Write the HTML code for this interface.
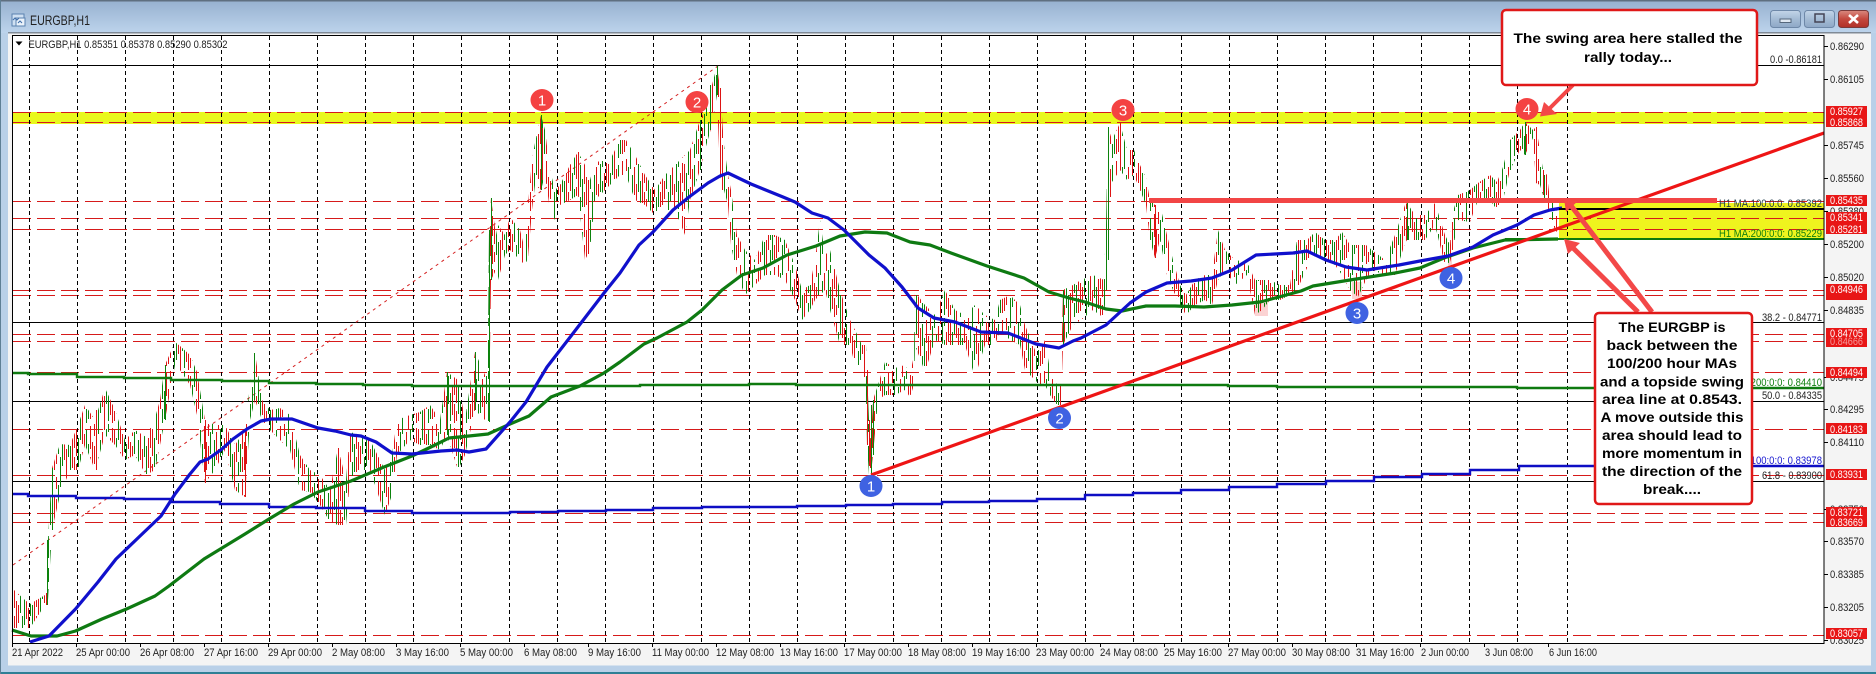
<!DOCTYPE html>
<html><head><meta charset="utf-8"><title>EURGBP,H1</title>
<style>
html,body{margin:0;padding:0;width:1876px;height:674px;overflow:hidden;background:#fff}
svg{display:block;position:absolute;left:0;top:0}
text{font-family:"Liberation Sans",sans-serif;font-size:11px;fill:#222}
text.w{fill:#fff}
.b{font-weight:bold;font-size:14px;fill:#000;text-anchor:middle}
.n{font-size:15px;fill:#fff;text-anchor:middle}
</style></head><body>
<svg width="1876" height="674" viewBox="0 0 1876 674" xmlns="http://www.w3.org/2000/svg">
<defs>
<linearGradient id="tb" x1="0" y1="0" x2="0" y2="1"><stop offset="0" stop-color="#96b0cf"/><stop offset="1" stop-color="#bdd4ec"/></linearGradient>
<linearGradient id="bt" x1="0" y1="0" x2="0" y2="1"><stop offset="0" stop-color="#c3d5e8"/><stop offset=".5" stop-color="#a4bbd5"/><stop offset="1" stop-color="#8ea8c6"/></linearGradient>
<linearGradient id="cl" x1="0" y1="0" x2="0" y2="1"><stop offset="0" stop-color="#d98a80"/><stop offset=".5" stop-color="#c4483e"/><stop offset="1" stop-color="#b03028"/></linearGradient>
<pattern id="bars" patternUnits="userSpaceOnUse" x="0" y="0" width="38" height="53">
<path fill="none" stroke="#dd1414" stroke-width="1" shape-rendering="crispEdges" d="M.5 5V32M.5 40V50M6.5 0V20M6.5 28V53M8.5 10V38M14.5 2V25M14.5 33V48M16.5 18V46M18.5 0V12M18.5 22V40M26.5 8V36M28.5 25V53M28.5 0V6M34.5 14V44M36.5 4V24M36.5 33V52"/>
<path fill="none" stroke="#0c820c" stroke-width="1" shape-rendering="crispEdges" d="M2.5 14V43M4.5 0V16M4.5 30V53M10.5 6V28M10.5 38V52M12.5 20V48M20.5 8V30M22.5 33V53M22.5 0V10M24.5 16V42M30.5 5V33M32.5 22V50M32.5 0V8"/>
</pattern>
</defs>
<!-- window frame -->
<rect width="1876" height="674" fill="#b9d0e8"/>
<rect width="1876" height="33" fill="url(#tb)"/>
<rect width="1876" height="1.5" fill="#5f6f80"/>
<rect y="32" x="8" width="1863" height="1.5" fill="#7f8a96"/>
<rect x="8" y="33.5" width="1863" height="632" fill="#f4f4f4"/>
<rect x="0" y="672" width="1876" height="2" fill="#2f7f95"/>
<rect x="0" y="0" width="1" height="674" fill="#5f7f95"/>
<!-- title bar -->
<rect x="12" y="14" width="12" height="12" fill="#cfe0f2" stroke="#5b82b0"/>
<rect x="16" y="18" width="9" height="8" fill="#eaf2fa" stroke="#5b82b0"/>
<path d="M13 20l2-2 2 2 2-2M18 23l2-2 2 2" stroke="#3d6ca8" fill="none"/>
<text x="30" y="25" style="font-size:14px" textLength="60" lengthAdjust="spacingAndGlyphs">EURGBP,H1</text>
<!-- buttons -->
<rect x="1770.5" y="10.5" width="30" height="17" rx="3" fill="url(#bt)" stroke="#6e88a8"/>
<rect x="1780" y="19" width="11" height="3.5" fill="#dfe8f2" stroke="#55677c"/>
<rect x="1804.5" y="10.5" width="30" height="17" rx="3" fill="url(#bt)" stroke="#6e88a8"/>
<rect x="1815" y="14" width="9" height="8" fill="none" stroke="#445" stroke-width="1.5"/>
<rect x="1838.5" y="10.5" width="30" height="17" rx="3" fill="url(#cl)" stroke="#7a3a3a"/>
<path d="M1849 15l9 8M1858 15l-9 8" stroke="#fff" stroke-width="2.6"/>
<!-- chart -->
<rect x="12" y="35" width="1812" height="608" fill="#fff"/>
<!-- yellow -->
<rect x="13" y="112" width="1811" height="12" fill="#e9f81c"/>
<rect x="1559" y="203" width="265" height="36" fill="#eff41e"/>
<!-- fib solid lines -->
<g stroke="#000" stroke-width="1" shape-rendering="crispEdges">
<path d="M13 65.5H1824M13 322.5H1824M13 401.5H1824M13 481.5H1824"/>
</g>
<!-- red dashed -->
<g stroke="#d61a1a" stroke-width="1" stroke-dasharray="18 6" fill="none" shape-rendering="crispEdges">
<path d="M13 112.5H1824M13 122.5H1824M13 201.5H1824M13 218.5H1824M13 229.5H1824M13 290.5H1824M13 295.5H1824M13 334.5H1824M13 341.5H1824M13 372.5H1824M13 429.5H1824M13 475.5H1824M13 513.5H1824M13 522.5H1824M13 635.5H1824"/>
</g>
<!-- separators -->
<g stroke="#000" stroke-width="1" stroke-dasharray="4 3" shape-rendering="crispEdges">
<path d="M29.5 36V643M77.5 36V643M125.5 36V643M173.5 36V643M221.5 36V643M269.5 36V643M317.5 36V643M365.5 36V643M413.5 36V643M461.5 36V643M509.5 36V643M557.5 36V643M605.5 36V643M653.5 36V643M701.5 36V643M749.5 36V643M797.5 36V643M845.5 36V643M893.5 36V643M941.5 36V643M989.5 36V643M1037.5 36V643M1085.5 36V643M1133.5 36V643M1181.5 36V643M1229.5 36V643M1277.5 36V643M1325.5 36V643M1373.5 36V643M1421.5 36V643M1469.5 36V643M1517.5 36V643M1567.5 36V643"/>
</g>
<!-- fib diagonal -->
<path d="M13 565L718 66" stroke="#d52020" stroke-width="1" stroke-dasharray="3 4" fill="none"/>
<!-- pale blotches -->
<g fill="#fbd3d3"><rect x="1255" y="300" width="13" height="16"/><rect x="1352" y="282" width="10" height="17"/><rect x="1448" y="257" width="4" height="10"/></g>
<!-- candles: price envelope filled with a bar pattern -->
<polygon fill="url(#bars)" points="14,590 25,600 30,604 45,595 47,580 48,540 52,468 60,444 70,445 78,425 85,405 95,420 105,388 115,410 125,440 135,430 146,437 155,418 160,400 165,365 175,342 180,346 190,355 197,372 205,420 215,425 225,425 235,445 245,430 250,385 255,353 262,400 270,410 280,408 290,415 300,455 310,470 320,475 330,490 338,448 346,480 350,432 360,435 370,440 385,470 392,455 397,420 410,415 420,412 430,405 440,420 447,372 458,380 465,420 475,352 485,375 488,340 489,230 491,198 496,235 498,225 505,235 510,217 520,230 525,250 528,205 532,160 535,143 541,115 545,130 550,170 555,190 560,185 570,165 578,152 585,165 590,180 595,162 610,160 620,140 626,140 635,155 645,175 655,190 665,175 675,165 685,155 690,150 700,120 705,110 712,85 717,66 720,88 724,145 728,175 731,190 737,235 745,250 755,260 765,235 775,235 785,240 795,265 802,290 810,285 815,260 820,220 825,255 830,250 840,290 850,320 855,330 862,345 866,345 867,370 869,420 871,440 873,400 878,385 885,362 895,368 905,365 910,375 914,355 915,292 925,305 935,315 945,290 955,310 965,315 975,305 985,315 995,320 1000,300 1010,295 1020,305 1025,325 1035,350 1040,350 1045,340 1050,370 1057,385 1061,380 1063,290 1073,285 1081,280 1093,275 1104,280 1106,225 1108,127 1112,140 1120,123 1127,150 1134,150 1140,165 1146,178 1150,200 1155,205 1160,205 1167,235 1173,260 1180,285 1186,295 1195,280 1205,275 1212,275 1218,230 1225,250 1235,260 1247,262 1255,280 1262,280 1270,280 1280,285 1290,285 1297,240 1307,240 1315,232 1325,240 1335,240 1342,232 1350,245 1358,245 1366,245 1372,250 1385,260 1395,235 1405,205 1407,203 1415,215 1425,215 1435,203 1445,235 1450,245 1452,215 1458,195 1470,190 1478,183 1490,175 1497,182 1503,167 1510,140 1520,130 1525,122 1533,130 1536,127 1540,150 1543,170 1547,175 1550,200 1555,203 1557,215 1557,232 1555,230 1550,215 1547,205 1543,195 1540,185 1536,183 1533,138 1525,155 1520,150 1510,170 1503,200 1497,210 1490,200 1478,200 1470,222 1458,220 1452,255 1450,262 1445,265 1435,225 1425,240 1415,240 1407,240 1405,243 1395,275 1385,275 1372,270 1366,280 1358,297 1350,290 1342,275 1335,265 1325,260 1315,255 1307,268 1297,290 1290,295 1280,300 1270,300 1262,310 1255,315 1247,275 1235,285 1225,270 1218,280 1212,305 1205,300 1195,305 1186,315 1180,305 1173,290 1167,275 1160,240 1155,258 1150,240 1146,205 1140,190 1134,175 1127,180 1120,170 1112,182 1108,260 1106,290 1104,318 1093,310 1081,320 1073,325 1063,345 1061,405 1057,405 1050,395 1045,385 1040,385 1035,380 1025,370 1020,345 1010,340 1000,330 995,345 985,345 975,377 965,345 955,345 945,345 935,340 925,372 915,345 914,385 910,397 905,390 895,395 885,395 878,400 873,455 871,474 869,475 867,445 866,395 862,365 855,365 850,345 840,345 830,310 825,290 820,295 815,300 810,310 802,320 795,300 785,280 775,275 765,275 755,285 745,295 737,275 731,245 728,205 724,190 720,175 717,95 712,125 705,150 700,170 690,200 685,235 675,210 665,210 655,215 645,205 635,200 626,175 620,175 610,185 595,200 590,250 585,260 578,195 570,200 560,205 555,220 550,210 545,175 541,190 535,185 532,210 528,258 525,265 520,260 510,250 505,255 498,280 496,270 491,280 489,422 488,422 485,420 475,410 465,455 458,470 447,435 440,450 430,445 420,445 410,440 397,455 392,495 385,515 370,470 360,470 350,480 346,525 338,525 330,522 320,505 310,492 300,490 290,450 280,440 270,430 262,420 255,400 250,420 245,497 235,490 225,450 215,470 205,483 197,415 190,385 180,370 175,365 165,420 160,445 155,470 146,475 135,455 125,460 115,445 105,435 95,470 85,445 78,470 70,470 60,495 52,530 48,600 47,605 45,605 30,628 25,628 14,628"/>
<!-- key extreme bars -->
<path fill="none" stroke="#0c820c" stroke-width="1" shape-rendering="crispEdges" d="M489.5 230V422M491.5 198V280M541.5 115V190M717.5 66V95M710.5 85V130M700.5 120V170M1106.5 225V290M1108.5 127V260M873.5 400V455M871.5 405V475M1063.5 290V345M1407.5 203V240M1458.5 195V220M1510.5 140V170M1525.5 122V155M47.5 540V605M52.5 468V530M165.5 365V420M254.5 353V400M447.5 372V435M475.5 352V410"/>
<path fill="none" stroke="#dd1414" stroke-width="1" shape-rendering="crispEdges" d="M12.5 566V620M720.5 88V175M722.5 145V190M1120.5 123V170M1536.5 127V183M1543.5 170V195M867.5 370V445M869.5 420V466M1155.5 205V258M588.5 180V254M338.5 448V525M245.5 430V497M205.5 420V483M96.5 410V470M542.5 128V180M578.5 152V195M1132.5 150V175"/>
<!-- flat MAs -->
<path d="M12 494H28V496H76V498H124V499H171V502H220V504H269V507H316V508H365V511H412V513H510V512H558V511H606V510H653V508H702V507H797V506H846V505H893V504H942V502H989V501H1037V499H1085V495H1133V493H1181V490H1229V487H1277V484H1326V481H1374V477H1422V474H1470V470H1519V466H1824" stroke="#0d0dc4" stroke-width="2.4" fill="none"/>
<path d="M12 373H28V374H77V377H124V378H171V380H222V381H269V383H316V384H363V385H412V386H640V385H749V384H796V385H1228V386H1277V387H1517V388H1824" stroke="#0f7a10" stroke-width="2.4" fill="none"/>
<!-- 200 MA -->
<polyline fill="none" stroke="#0e7a12" stroke-width="3.2" stroke-linejoin="round" points="12,630 31,636 57,636 75.5,631 102,619 126.5,609 155,596 169,586 204,559 245,534 269,519 294,504 318,492 351,481 384,467 412,456 433,446 449,438 469,436 488,434 510,424 529,416 551,397 580,386 604,373 620,362 644,344 657,338 687,322 702,310 722,290 742,275 763,268 787,255 816,246 840,236 865,232 887,233 910,242 930,245 951,253 987,266 1024,278 1049,292 1069,298 1085,302 1106,309 1122,311 1146,306 1175,306 1204,307 1232,305 1260,302 1264,301 1301,291 1313,286 1350,280 1395,273 1420,268 1444,258 1473,248 1505,240 1558,239"/>
<!-- 100 MA -->
<polyline fill="none" stroke="#1010cc" stroke-width="3.2" stroke-linejoin="round" points="30,642 49,636 75.5,609 98,582 116,559 139,537 161,516 175,494 190,474 200,462 208,459 222,449 233,439 247,429 261,421 271,419 292,419 318,428 335,431 351,435 361,436 376,442 392,453 412,454 441,451 457,450 469,452 486,449 510,422 526,402 547,367 571,336 604,293 620,273 639,245 653,232 673,210 689,197 708,183 720,176 728,173 751,184 783,197 795,202 812,213 828,218 844,230 869,255 885,268 902,287 918,308 934,318 955,322 981,332 1008,333 1036,344 1059,348 1073,341 1081,338 1106,325 1130,303 1146,292 1167,283 1191,281 1212,278 1232,270 1256,255 1293,253 1307,251 1326,260 1346,267 1367,270 1399,265 1420,261 1448,256 1473,247 1493,235 1517,225 1534,215 1550,210 1562,208"/>
<!-- H1 MA extension lines -->
<path d="M1559 209H1824" stroke="#000" stroke-width="2"/>
<path d="M1505 239H1824" stroke="#0d7a0d" stroke-width="2"/>
<!-- trend -->
<path d="M871 475L1824 133" stroke="#ee1515" stroke-width="3.2"/>
<rect x="1149" y="198" width="568" height="5" fill="#f24545"/>
<!-- line labels -->
<text x="1822" y="63" text-anchor="end" textLength="52" lengthAdjust="spacingAndGlyphs">0.0 -0.86181</text>
<text x="1822" y="207" text-anchor="end" textLength="103" lengthAdjust="spacingAndGlyphs" style="fill:#1f3a4a">H1 MA:100:0:0: 0.85392</text>
<text x="1822" y="237" text-anchor="end" textLength="103" lengthAdjust="spacingAndGlyphs" style="fill:#108010">H1 MA:200:0:0: 0.85229</text>
<text x="1822" y="321" text-anchor="end" textLength="60" lengthAdjust="spacingAndGlyphs">38.2 - 0.84771</text>
<text x="1822" y="386" text-anchor="end" textLength="103" lengthAdjust="spacingAndGlyphs" style="fill:#108010">D1 MA:200:0:0: 0.84410</text>
<text x="1822" y="399" text-anchor="end" textLength="60" lengthAdjust="spacingAndGlyphs">50.0 - 0.84335</text>
<text x="1822" y="464" text-anchor="end" textLength="103" lengthAdjust="spacingAndGlyphs" style="fill:#1616d0">D1 MA:100:0:0: 0.83978</text>
<text x="1822" y="479" text-anchor="end" textLength="60" lengthAdjust="spacingAndGlyphs">61.8 - 0.83900</text>
<!-- header -->
<path d="M15.5 41.5h7l-3.5 4z" fill="#000"/>
<text x="28.5" y="48" textLength="199" lengthAdjust="spacingAndGlyphs">EURGBP,H1  0.85351 0.85378 0.85290 0.85302</text>
<!-- border -->
<rect x="12.5" y="35.5" width="1811.5" height="608" fill="none" stroke="#000"/>
<!-- bottom ticks -->
<path stroke="#000" d="M12.5 643v4M76.5 643v4M140.5 643v4M204.5 643v4M268.5 643v4M332.5 643v4M396.5 643v4M460.5 643v4M524.5 643v4M588.5 643v4M652.5 643v4M716.5 643v4M780.5 643v4M844.5 643v4M908.5 643v4M972.5 643v4M1036.5 643v4M1100.5 643v4M1164.5 643v4M1228.5 643v4M1292.5 643v4M1356.5 643v4M1420.5 643v4M1484.5 643v4M1548.5 643v4" shape-rendering="crispEdges"/>
<!-- date labels -->
<g>
<text x="12" y="656" textLength="51" lengthAdjust="spacingAndGlyphs">21 Apr 2022</text>
<text x="76" y="656" textLength="54" lengthAdjust="spacingAndGlyphs">25 Apr 00:00</text>
<text x="140" y="656" textLength="54" lengthAdjust="spacingAndGlyphs">26 Apr 08:00</text>
<text x="204" y="656" textLength="54" lengthAdjust="spacingAndGlyphs">27 Apr 16:00</text>
<text x="268" y="656" textLength="54" lengthAdjust="spacingAndGlyphs">29 Apr 00:00</text>
<text x="332" y="656" textLength="53" lengthAdjust="spacingAndGlyphs">2 May 08:00</text>
<text x="396" y="656" textLength="53" lengthAdjust="spacingAndGlyphs">3 May 16:00</text>
<text x="460" y="656" textLength="53" lengthAdjust="spacingAndGlyphs">5 May 00:00</text>
<text x="524" y="656" textLength="53" lengthAdjust="spacingAndGlyphs">6 May 08:00</text>
<text x="588" y="656" textLength="53" lengthAdjust="spacingAndGlyphs">9 May 16:00</text>
<text x="652" y="656" textLength="57" lengthAdjust="spacingAndGlyphs">11 May 00:00</text>
<text x="716" y="656" textLength="58" lengthAdjust="spacingAndGlyphs">12 May 08:00</text>
<text x="780" y="656" textLength="58" lengthAdjust="spacingAndGlyphs">13 May 16:00</text>
<text x="844" y="656" textLength="58" lengthAdjust="spacingAndGlyphs">17 May 00:00</text>
<text x="908" y="656" textLength="58" lengthAdjust="spacingAndGlyphs">18 May 08:00</text>
<text x="972" y="656" textLength="58" lengthAdjust="spacingAndGlyphs">19 May 16:00</text>
<text x="1036" y="656" textLength="58" lengthAdjust="spacingAndGlyphs">23 May 00:00</text>
<text x="1100" y="656" textLength="58" lengthAdjust="spacingAndGlyphs">24 May 08:00</text>
<text x="1164" y="656" textLength="58" lengthAdjust="spacingAndGlyphs">25 May 16:00</text>
<text x="1228" y="656" textLength="58" lengthAdjust="spacingAndGlyphs">27 May 00:00</text>
<text x="1292" y="656" textLength="58" lengthAdjust="spacingAndGlyphs">30 May 08:00</text>
<text x="1356" y="656" textLength="58" lengthAdjust="spacingAndGlyphs">31 May 16:00</text>
<text x="1421" y="656" textLength="48" lengthAdjust="spacingAndGlyphs">2 Jun 00:00</text>
<text x="1485" y="656" textLength="48" lengthAdjust="spacingAndGlyphs">3 Jun 08:00</text>
<text x="1549" y="656" textLength="48" lengthAdjust="spacingAndGlyphs">6 Jun 16:00</text>
</g>
<!-- price axis -->
<path stroke="#000" d="M1824 46.5h4M1824 79.5h4M1824 145.5h4M1824 178.5h4M1824 211.5h4M1824 244.5h4M1824 277.5h4M1824 310.5h4M1824 377.5h4M1824 409.5h4M1824 442.5h4M1824 509.5h4M1824 541.5h4M1824 574.5h4M1824 607.5h4M1824 640.5h4" shape-rendering="crispEdges"/>
<g>
<text x="1830" y="50" textLength="34" lengthAdjust="spacingAndGlyphs">0.86290</text>
<text x="1830" y="83" textLength="34" lengthAdjust="spacingAndGlyphs">0.86105</text>
<text x="1830" y="149" textLength="34" lengthAdjust="spacingAndGlyphs">0.85745</text>
<text x="1830" y="182" textLength="34" lengthAdjust="spacingAndGlyphs">0.85560</text>
<text x="1830" y="215" textLength="34" lengthAdjust="spacingAndGlyphs">0.85380</text>
<text x="1830" y="248" textLength="34" lengthAdjust="spacingAndGlyphs">0.85200</text>
<text x="1830" y="281" textLength="34" lengthAdjust="spacingAndGlyphs">0.85020</text>
<text x="1830" y="314" textLength="34" lengthAdjust="spacingAndGlyphs">0.84835</text>
<text x="1830" y="381" textLength="34" lengthAdjust="spacingAndGlyphs">0.84475</text>
<text x="1830" y="413" textLength="34" lengthAdjust="spacingAndGlyphs">0.84295</text>
<text x="1830" y="446" textLength="34" lengthAdjust="spacingAndGlyphs">0.84110</text>
<text x="1830" y="513" textLength="34" lengthAdjust="spacingAndGlyphs">0.83750</text>
<text x="1830" y="545" textLength="34" lengthAdjust="spacingAndGlyphs">0.83570</text>
<text x="1830" y="578" textLength="34" lengthAdjust="spacingAndGlyphs">0.83385</text>
<text x="1830" y="611" textLength="34" lengthAdjust="spacingAndGlyphs">0.83205</text>
<text x="1830" y="644" textLength="34" lengthAdjust="spacingAndGlyphs">0.83025</text>
</g>
<!-- price tags -->
<g fill="#e81616">
<rect x="1826" y="106" width="41" height="11"/><rect x="1826" y="116" width="41" height="11"/>
<rect x="1826" y="195" width="41" height="11"/>
<rect x="1826" y="212" width="41" height="11"/><rect x="1826" y="223" width="41" height="11"/>
<rect x="1826" y="284" width="41" height="16"/>
<rect x="1826" y="328" width="41" height="19"/>
<rect x="1826" y="367" width="41" height="11"/>
<rect x="1826" y="423" width="41" height="11"/>
<rect x="1826" y="469" width="41" height="11"/>
<rect x="1826" y="507" width="41" height="20"/>
<rect x="1826" y="628" width="41" height="11"/>
</g>
<g>
<text class="w" x="1830" y="115" textLength="33" lengthAdjust="spacingAndGlyphs">0.85927</text>
<text class="w" x="1830" y="126" textLength="33" lengthAdjust="spacingAndGlyphs">0.85868</text>
<text class="w" x="1830" y="204" textLength="33" lengthAdjust="spacingAndGlyphs">0.85435</text>
<text class="w" x="1830" y="221" textLength="33" lengthAdjust="spacingAndGlyphs">0.85341</text>
<text class="w" x="1830" y="233" textLength="33" lengthAdjust="spacingAndGlyphs">0.85281</text>
<text class="w" x="1830" y="293" textLength="33" lengthAdjust="spacingAndGlyphs">0.84946</text>
<text class="w" x="1830" y="337" textLength="33" lengthAdjust="spacingAndGlyphs">0.84705</text>
<text class="w" x="1830" y="345" textLength="33" lengthAdjust="spacingAndGlyphs" style="opacity:.55">0.84666</text>
<text class="w" x="1830" y="376" textLength="33" lengthAdjust="spacingAndGlyphs">0.84494</text>
<text class="w" x="1830" y="433" textLength="33" lengthAdjust="spacingAndGlyphs">0.84183</text>
<text class="w" x="1830" y="478" textLength="33" lengthAdjust="spacingAndGlyphs">0.83931</text>
<text class="w" x="1830" y="516" textLength="33" lengthAdjust="spacingAndGlyphs">0.83721</text>
<text class="w" x="1830" y="526" textLength="33" lengthAdjust="spacingAndGlyphs">0.83669</text>
<text class="w" x="1830" y="637" textLength="33" lengthAdjust="spacingAndGlyphs">0.83057</text>
</g>
<!-- arrows -->
<g fill="#f34848" stroke="none">
<path d="M1550 108L1573 85" stroke="#f34848" stroke-width="4"/>
<path d="M1540 116.5L1544 102L1557 114z"/>
<path d="M1652 312L1569 203" stroke="#f34848" stroke-width="5"/>
<path d="M1564 199L1578 201L1566 212z"/>
<path d="M1638 312L1567 242" stroke="#f34848" stroke-width="5"/>
<path d="M1564 239L1580 243L1568 254z"/>
</g>
<!-- circles -->
<g fill="#f44242">
<ellipse cx="542" cy="100" rx="11.5" ry="11"/><ellipse cx="697" cy="102" rx="11.5" ry="11"/><ellipse cx="1123" cy="110" rx="11.5" ry="11"/><ellipse cx="1527" cy="109" rx="11.5" ry="11"/>
</g>
<g fill="#3f62e2">
<ellipse cx="871" cy="486" rx="11.5" ry="11"/><ellipse cx="1059.5" cy="418" rx="11.5" ry="11"/><ellipse cx="1357" cy="313" rx="11.5" ry="11"/><ellipse cx="1451" cy="278" rx="11.5" ry="11"/>
</g>
<text class="n" x="542" y="105.5">1</text><text class="n" x="697" y="107.5">2</text><text class="n" x="1123" y="115.5">3</text><text class="n" x="1527" y="114.5">4</text>
<text class="n" x="871" y="491.5">1</text><text class="n" x="1059.5" y="423.5">2</text><text class="n" x="1357" y="318.5">3</text><text class="n" x="1451" y="283.5">4</text>
<!-- callouts -->
<rect x="1502" y="10" width="255" height="75" rx="4" fill="#fff" stroke="#e01818" stroke-width="2.5"/>
<text class="b" x="1628" y="43" textLength="229" lengthAdjust="spacingAndGlyphs">The swing area here stalled the</text>
<text class="b" x="1628" y="62" textLength="88" lengthAdjust="spacingAndGlyphs">rally today...</text>
<rect x="1595" y="313" width="157" height="191" rx="4" fill="#fff" stroke="#e01818" stroke-width="2.5"/>
<g>
<text class="b" x="1672" y="332" textLength="107" lengthAdjust="spacingAndGlyphs">The EURGBP is</text>
<text class="b" x="1672" y="350" textLength="131" lengthAdjust="spacingAndGlyphs">back between the</text>
<text class="b" x="1672" y="368" textLength="130" lengthAdjust="spacingAndGlyphs">100/200 hour MAs</text>
<text class="b" x="1672" y="386.500" textLength="144" lengthAdjust="spacingAndGlyphs">and a topside swing</text>
<text class="b" x="1672" y="404" textLength="140" lengthAdjust="spacingAndGlyphs">area line at 0.8543.</text>
<text class="b" x="1672" y="422" textLength="143" lengthAdjust="spacingAndGlyphs">A move outside this</text>
<text class="b" x="1672" y="440" textLength="140" lengthAdjust="spacingAndGlyphs">area should lead to</text>
<text class="b" x="1672" y="458" textLength="140" lengthAdjust="spacingAndGlyphs">more momentum in</text>
<text class="b" x="1672" y="476" textLength="140" lengthAdjust="spacingAndGlyphs">the direction of the</text>
<text class="b" x="1672" y="494" textLength="58" lengthAdjust="spacingAndGlyphs">break....</text>
</g>
</svg>
</body></html>
